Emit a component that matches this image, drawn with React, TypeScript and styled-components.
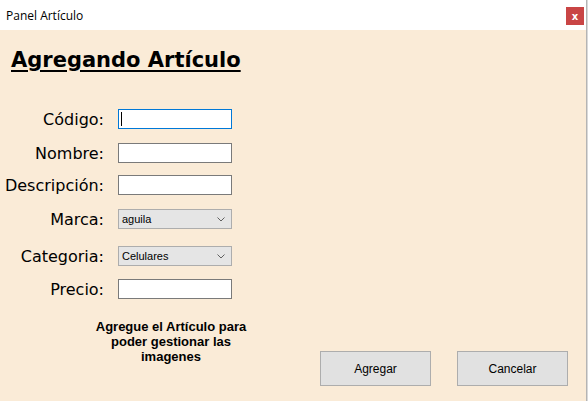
import styled, { createGlobalStyle } from "styled-components";

const GlobalStyle = createGlobalStyle`
  html, body {
    margin: 0;
    padding: 0;
    background: #d9d9d9;
  }
  * {
    box-sizing: border-box;
  }
`;

const Window = styled.div`
  width: 587px;
  height: 401px;
  display: flex;
  flex-direction: column;
  border-right: 1px solid #b4b4b4;
  background: #faebd7;
`;

const TitleBar = styled.div`
  height: 30px;
  background: #ffffff;
  display: flex;
  align-items: center;
  justify-content: space-between;
  padding: 0 2px 0 6px;
  font-family: "Open Sans", "Liberation Sans", sans-serif;
  font-size: 12px;
  color: #000;
`;

const CloseButton = styled.div`
  width: 18px;
  height: 18px;
  margin-top: 2px;
  background: #c94545;
  color: #fff;
  font-family: "DejaVu Sans", sans-serif;
  font-size: 10px;
  font-weight: bold;
  display: flex;
  align-items: center;
  justify-content: center;
`;

const Content = styled.div`
  flex: 1;
  display: flex;
  flex-direction: column;
  padding: 17px 0 0 0;
`;

const Heading = styled.h1`
  margin: 0 0 0 11px;
  font-family: "DejaVu Sans", "Liberation Sans", sans-serif;
  font-size: 21px;
  font-weight: bold;
  text-decoration: underline;
  text-decoration-thickness: 2px;
  text-underline-offset: 3px;
  line-height: 26px;
  color: #000;
`;

const Form = styled.div`
  margin-top: 36px;
  display: grid;
  grid-template-columns: 104px 114px;
  column-gap: 14px;
  align-items: center;
`;

const Label = styled.label<{ $top: number }>`
  margin-top: ${(p) => p.$top}px;
  text-align: right;
  font-family: "DejaVu Sans", "Liberation Sans", sans-serif;
  font-size: 16px;
  color: #000;
  white-space: nowrap;
`;

const Field = styled.div<{ $top: number; $focused?: boolean }>`
  margin-top: ${(p) => p.$top}px;
  height: 20px;
  background: #fff;
  border: 1px solid ${(p) => (p.$focused ? "#0078d7" : "#7a7a7a")};
  display: flex;
  align-items: center;
  padding-left: 2px;
`;

const Caret = styled.span`
  width: 1px;
  height: 14px;
  background: #000;
`;

const Select = styled.div<{ $top: number }>`
  margin-top: ${(p) => p.$top}px;
  height: 20px;
  background: #e5e5e5;
  border: 1px solid #adadad;
  display: flex;
  align-items: center;
  justify-content: space-between;
  padding: 0 6px 0 3px;
  font-family: "Liberation Sans", Arial, sans-serif;
  font-size: 11px;
  color: #000;
`;

const Footer = styled.div`
  display: flex;
  align-items: flex-start;
  margin-top: 20px;
`;

const Notice = styled.p`
  margin: 0 0 0 88px;
  width: 166px;
  text-align: center;
  font-family: "Liberation Sans", Arial, sans-serif;
  font-size: 13px;
  font-weight: bold;
  line-height: 15px;
  color: #000;
`;

const Buttons = styled.div`
  display: flex;
  gap: 26px;
  margin: 32px 0 0 66px;
`;

const Button = styled.button`
  width: 111px;
  height: 35px;
  background: #e1e1e1;
  border: 1px solid #adadad;
  font-family: "Liberation Sans", Arial, sans-serif;
  font-size: 12px;
  color: #000;
  padding: 0;
`;

const Chevron = () => (
  <svg width="8" height="5" viewBox="0 0 8 5">
    <polyline points="0.5,0.5 4,4 7.5,0.5" fill="none" stroke="#606060" strokeWidth="1" />
  </svg>
);

export default function App() {
  return (
    <>
      <GlobalStyle />
      <Window>
        <TitleBar>
          <span>Panel Artículo</span>
          <CloseButton>x</CloseButton>
        </TitleBar>
        <Content>
          <Heading>Agregando Artículo</Heading>
          <Form>
            <Label $top={0}>Código:</Label>
            <Field $top={0} $focused>
              <Caret />
            </Field>
            <Label $top={14}>Nombre:</Label>
            <Field $top={14} />
            <Label $top={12}>Descripción:</Label>
            <Field $top={12} />
            <Label $top={14}>Marca:</Label>
            <Select $top={14}>
              <span>aguila</span>
              <Chevron />
            </Select>
            <Label $top={17}>Categoria:</Label>
            <Select $top={17}>
              <span>Celulares</span>
              <Chevron />
            </Select>
            <Label $top={13}>Precio:</Label>
            <Field $top={13} />
          </Form>
          <Footer>
            <Notice>Agregue el Artículo para poder gestionar las imagenes</Notice>
            <Buttons>
              <Button>Agregar</Button>
              <Button>Cancelar</Button>
            </Buttons>
          </Footer>
        </Content>
      </Window>
    </>
  );
}
